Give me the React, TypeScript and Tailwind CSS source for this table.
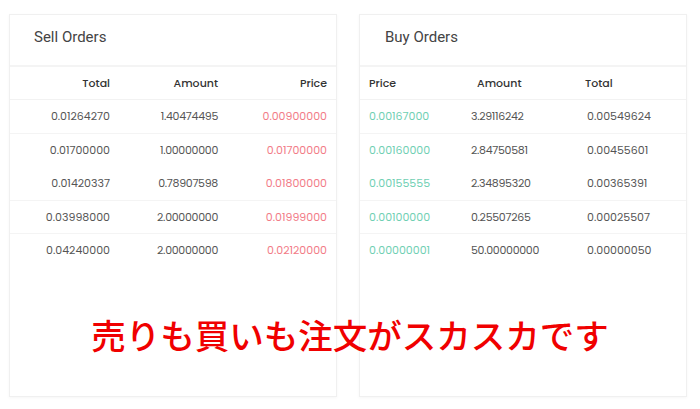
const sellOrders = [
  { total: "0.01264270", amount: "1.40474495", price: "0.00900000" },
  { total: "0.01700000", amount: "1.00000000", price: "0.01700000" },
  { total: "0.01420337", amount: "0.78907598", price: "0.01800000" },
  { total: "0.03998000", amount: "2.00000000", price: "0.01999000" },
  { total: "0.04240000", amount: "2.00000000", price: "0.02120000" },
];

const buyOrders = [
  { price: "0.00167000", amount: "3.29116242", total: "0.00549624" },
  { price: "0.00160000", amount: "2.84750581", total: "0.00455601" },
  { price: "0.00155555", amount: "2.34895320", total: "0.00365391" },
  { price: "0.00100000", amount: "0.25507265", total: "0.00025507" },
  { price: "0.00000001", amount: "50.00000000", total: "0.00000050" },
];

const numFont = { fontFamily: "Poppins, Lato, 'Open Sans', sans-serif" };

// rows with a divider underneath (the reference skips some)
const ruled = [true, false, true, true, false];

const App = () => {
  return (
    <div className="relative w-[700px] h-[409px] bg-white overflow-hidden">
      <div className="flex gap-[22px] pl-[9px] pt-[14px]">
        {/* Sell Orders */}
        <div className="w-[328px] h-[383px] bg-white border border-[#f0f0f0] shadow-[0_1px_3px_rgba(0,0,0,0.04)]">
          <div className="h-[52px] pt-[12px] pl-[24px] border-b-2 border-[#f4f4f4]">
            <h2 className="text-[15px] leading-[20px] text-[#444] font-['Roboto',sans-serif]">Sell Orders</h2>
          </div>
          <div style={numFont} className="text-[11px] text-[#555]">
            <div className="grid grid-cols-[100px_108px_109px] h-[33px] items-center border-b border-[#f2f2f2] text-[#333] font-medium">
              <span className="text-right">Total</span>
              <span className="text-right">Amount</span>
              <span className="text-right">Price</span>
            </div>
            {sellOrders.map((o, i) => (
              <div
                key={i}
                className={
                  "grid grid-cols-[100px_108px_109px] h-[33.5px] items-center border-b " +
                  (ruled[i] ? "border-[#f4f4f4]" : "border-transparent")
                }
              >
                <span className="text-right">{o.total}</span>
                <span className="text-right tracking-[-0.3px]">{o.amount}</span>
                <span className="text-right text-[#f27a86]">{o.price}</span>
              </div>
            ))}
          </div>
        </div>

        {/* Buy Orders */}
        <div className="w-[328px] h-[383px] bg-white border border-[#f0f0f0] shadow-[0_1px_3px_rgba(0,0,0,0.04)]">
          <div className="h-[52px] pt-[12px] pl-[25px] border-b-2 border-[#f4f4f4]">
            <h2 className="text-[15px] leading-[20px] text-[#444] font-['Roboto',sans-serif]">Buy Orders</h2>
          </div>
          <div style={numFont} className="text-[11px] text-[#555]">
            <div className="grid grid-cols-[108px_108px_100px] h-[33px] items-center border-b border-[#f2f2f2] text-[#333] font-medium pl-[9px]">
              <span>Price</span>
              <span>Amount</span>
              <span>Total</span>
            </div>
            {buyOrders.map((o, i) => (
              <div
                key={i}
                className={
                  "grid grid-cols-[102px_116px_100px] h-[33.5px] items-center pl-[9px] border-b " +
                  (ruled[i] ? "border-[#f4f4f4]" : "border-transparent")
                }
              >
                <span className="text-[#6fcfb3]">{o.price}</span>
                <span className="tracking-[-0.3px]">{o.amount}</span>
                <span>{o.total}</span>
              </div>
            ))}
          </div>
        </div>
      </div>

      {/* overlay caption */}
      <div className="absolute left-0 right-0 top-[312px] text-center">
        <span className="text-[34.5px] font-medium text-[#f00000] leading-[44px] font-['Noto_Sans_CJK_JP',sans-serif]">
          売りも買いも注文がスカスカです
        </span>
      </div>
    </div>
  );
};

export default App;
